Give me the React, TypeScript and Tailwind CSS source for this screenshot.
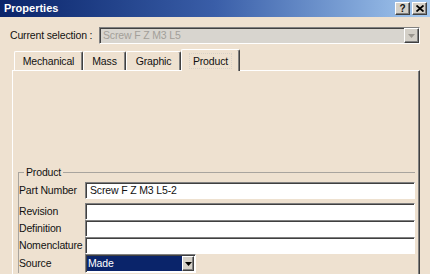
const raised =
  "bg-[#d4d0c8] border border-t-white border-l-white border-b-[#404040] border-r-[#404040] shadow-[inset_-1px_-1px_0_#808080]";
const sunken =
  "border border-t-[#808080] border-l-[#808080] border-b-white border-r-white shadow-[inset_1px_1px_0_#404040]";

function DownArrow({ color }: { color: string }) {
  return (
    <svg width="7" height="4" viewBox="0 0 7 4">
      <path d="M0 0h7L3.5 4z" fill={color} />
    </svg>
  );
}

function Tab({ label, width, active }: { label: string; width: string; active?: boolean }) {
  return (
    <div
      className={`${width} ${
        active ? "h-[22px] -mb-px relative z-10 bg-[#eee1d0]" : "h-[19px]"
      } flex items-center justify-center border-t border-l border-white border-r border-r-[#404040] shadow-[inset_-1px_0_0_#808080] rounded-t-[2px]`}
    >
      {active ? (
        <span className="px-[3px] leading-[14px] border border-dotted border-[#d8d1c7]">{label}</span>
      ) : (
        <span>{label}</span>
      )}
    </div>
  );
}

function Field({ label, value, className = "" }: { label: string; value?: string; className?: string }) {
  return (
    <div className={`flex items-center h-[17px] ${className}`}>
      <span className="w-[66px] shrink-0">{label}</span>
      <div className={`flex-1 h-full bg-white flex items-center px-[4px] ${sunken}`}>{value}</div>
    </div>
  );
}

export default function App() {
  return (
    <div className="w-[430px] h-[274px] overflow-hidden bg-[#eee1d0] flex flex-col font-['Liberation_Sans',Arial,sans-serif] text-[10.5px] tracking-[-0.15px] text-[#111] leading-none">
      {/* title bar */}
      <div className="h-[17px] shrink-0 flex items-center justify-between pl-[4px] pr-[3px] bg-gradient-to-r from-[#0a246a] via-[#3a5ea8] to-[#a6caf0]">
        <span className="text-white font-bold text-[11px] tracking-normal">Properties</span>
        <div className="flex gap-[2px]">
          <div className={`w-[15px] h-[13px] flex items-center justify-center font-bold text-[10px] tracking-normal ${raised}`}>?</div>
          <div className={`w-[15px] h-[13px] flex items-center justify-center ${raised}`}>
            <svg width="8" height="7" viewBox="0 0 8 7">
              <path d="M0.5 0.5l7 6M7.5 0.5l-7 6" stroke="#000" strokeWidth="1.8" />
            </svg>
          </div>
        </div>
      </div>

      {/* current selection */}
      <div className="mt-[10px] h-[17px] shrink-0 flex items-center">
        <span className="w-[99px] pl-[10px] shrink-0">Current selection :</span>
        <div className={`flex-1 mr-[10px] h-full bg-[#d8d5cf] flex items-center justify-between pl-[3px] ${sunken}`}>
          <span className="text-[#a39f99]">Screw F Z M3 L5</span>
          <div className={`w-[15px] h-[15px] flex items-center justify-center ${raised}`}>
            <DownArrow color="#9a968f" />
          </div>
        </div>
      </div>

      {/* tabs */}
      <div className="mt-[5px] ml-[12px] mr-[10px] flex-1 flex flex-col min-h-0">
        <div className="h-[21px] shrink-0 flex items-end pl-[2px]">
          <Tab label="Mechanical" width="w-[69px]" />
          <Tab label="Mass" width="w-[43px]" />
          <Tab label="Graphic" width="w-[55px]" />
          <Tab label="Product" width="w-[59px]" active />
        </div>
        <div className="flex-1 border-t border-l border-white border-r border-r-[#404040] shadow-[inset_-1px_0_0_#808080]">
          <fieldset className="mt-[95px] ml-[5px] mr-[4px] border-t border-l border-[#a8a49e] pt-[4px]">
            <legend className="ml-[5px] px-[2px] leading-[12px]">Product</legend>
            <Field label="Part Number" value="Screw F Z M3 L5-2" />
            <Field label="Revision" className="mt-[4px]" />
            <Field label="Definition" />
            <Field label="Nomenclature" />
            <div className="flex items-center h-[19px]">
              <span className="w-[66px] shrink-0">Source</span>
              <div className={`w-[111px] h-full bg-white flex p-[1px] ${sunken}`}>
                <div className="flex-1 bg-[#0a246a] text-white flex items-center pl-[1px]">Made</div>
                <div className={`w-[12px] flex items-center justify-center ${raised}`}>
                  <DownArrow color="#000" />
                </div>
              </div>
            </div>
          </fieldset>
        </div>
      </div>
    </div>
  );
}
